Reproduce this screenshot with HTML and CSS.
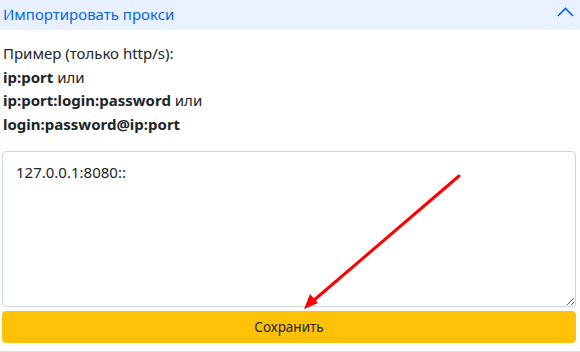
FILE: index.html
```html
<!DOCTYPE html>
<html lang="ru">
<head>
<meta charset="utf-8">
<link rel="stylesheet" href="styles.css">
</head>
<body>
<div class="panel">
  <div class="acc-header">
    <span class="acc-title">Импортировать прокси</span>
    <svg class="chev" width="17" height="10" viewBox="0 0 17 10"><path d="M1 9 L8.5 1.5 L16 9" fill="none" stroke="#0c63e4" stroke-width="1.6"/></svg>
  </div>
  <div class="acc-body">
    <div class="hint">
      <div>Пример (только http/s):</div>
      <div><b>ip:port</b> или</div>
      <div><b>ip:port:login:password</b> или</div>
      <div><b>login:password@ip:port</b></div>
    </div>
    <textarea class="proxies">127.0.0.1:8080::</textarea>
    <button class="save">Сохранить</button>
  </div>
  <svg class="arrow" width="580" height="352" viewBox="0 0 580 352">
    <line x1="459" y1="176" x2="313" y2="301" stroke="#ff0000" stroke-width="3" stroke-linecap="round"/>
    <polygon points="304,309 310,294 318,303" fill="#ff0000"/>
  </svg>
</div>
</body>
</html>
```
FILE: styles.css
```css
* { box-sizing: border-box; }
body {
  margin: 0;
  background: #fff;
  font-family: "Noto Sans", "Open Sans", sans-serif;
  color: #212529;
}
.panel {
  position: relative;
  width: 580px;
  height: 352px;
  border-bottom: 1px solid #dee2e6;
  overflow: hidden;
}
.acc-header {
  height: 30px;
  background: #e7f1ff;
  color: #0c63e4;
  display: flex;
  align-items: center;
  justify-content: space-between;
  padding: 0 6px 0 3px;
  font-size: 15px;
}
.acc-title { line-height: 26px; margin-top: -3px; }
.chev { margin-top: -6px; }
.acc-body {
  padding: 12px 4px 0 2px;
  display: flex;
  flex-direction: column;
}
.hint {
  font-size: 15px;
  line-height: 23.5px;
  padding-left: 1px;
}
.hint b { font-weight: 700; }
.proxies {
  margin-top: 15px;
  width: 574px;
  height: 156px;
  border: 1px solid #ced4da;
  border-radius: 4px;
  padding: 8px 13px;
  font-family: "Noto Sans", "Open Sans", sans-serif;
  font-size: 15px;
  line-height: 24px;
  color: #212529;
  resize: vertical;
}
.save {
  margin-top: 4px;
  width: 574px;
  height: 32px;
  background: #ffc107;
  border: 1px solid #ffc107;
  border-radius: 4px;
  font-family: "Noto Sans", "Open Sans", sans-serif;
  font-size: 13.5px;
  color: #212529;
  padding: 0;
}
.arrow {
  position: absolute;
  left: 0;
  top: 0;
  pointer-events: none;
}
```
